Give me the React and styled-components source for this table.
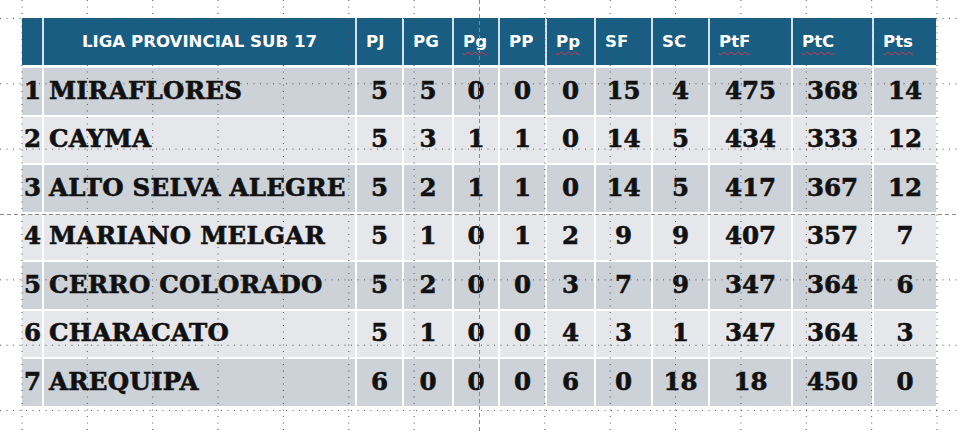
import React from 'react';
import styled, { createGlobalStyle } from 'styled-components';

const GlobalStyle = createGlobalStyle`
  html, body {
    margin: 0;
    padding: 0;
    background: #ffffff;
  }
`;

const COLS = '20px 311px 45px 48px 44px 45px 47px 55px 55px 81px 79px 62px';

const Page = styled.div`
  position: relative;
  width: 959px;
  height: 432px;
  overflow: hidden;
  padding: 18px 0 0 22px;
  box-sizing: border-box;
  background: #ffffff;
`;

const Table = styled.div`
  display: flex;
  flex-direction: column;
  gap: 2px;
  width: 914px;
`;

const HeaderRow = styled.div`
  display: grid;
  grid-template-columns: ${COLS};
  column-gap: 2px;
  height: 47px;
  margin-bottom: 1px;
  background: #d3e3ee;
`;

const HeadCell = styled.div`
  background: #1a5d82;
  color: #ffffff;
  font-family: "DejaVu Sans", "Liberation Sans", sans-serif;
  font-weight: 700;
  font-size: 16.6px;
  display: flex;
  align-items: center;
  justify-content: ${p => (p.$center ? 'center' : 'flex-start')};
  padding-left: ${p => (p.$center ? '0' : '9px')};
  padding-bottom: 1px;
  box-sizing: border-box;
  white-space: nowrap;
`;

const Label = styled.span`
  ${p => p.$typo && `
    text-decoration: underline wavy #d8383e;
    text-decoration-thickness: 1px;
    text-underline-offset: 4px;
  `}
`;

const Row = styled.div`
  display: grid;
  grid-template-columns: ${COLS};
  column-gap: 2px;
  height: 46.5px;
  background: #ffffff;
`;

const Cell = styled.div`
  background: ${p => (p.$dark ? '#cdd1d8' : '#e5e7ea')};
  color: #111111;
  font-family: "DejaVu Serif", "Liberation Serif", serif;
  font-weight: 700;
  font-size: 24.5px;
  -webkit-text-stroke: 0.6px #111111;
  display: flex;
  align-items: center;
  padding-bottom: 2px;
  box-sizing: border-box;
  white-space: nowrap;
  justify-content: center;
  overflow: visible;
`;

const RankCell = styled(Cell)`
  justify-content: flex-end;
  padding-right: 1px;
`;

const NameCell = styled(Cell)`
  justify-content: flex-start;
  padding-left: 5px;
  letter-spacing: 0.25px;
`;

const Guides = styled.svg`
  position: absolute;
  left: 0;
  top: 0;
  pointer-events: none;
`;

const headers = [
  { t: 'PJ' }, { t: 'PG' }, { t: 'Pg', typo: true }, { t: 'PP' },
  { t: 'Pp', typo: true }, { t: 'SF' }, { t: 'SC' },
  { t: 'PtF', typo: true }, { t: 'PtC', typo: true }, { t: 'Pts', typo: true },
];

const teams = [
  ['MIRAFLORES', 5, 5, 0, 0, 0, 15, 4, 475, 368, 14],
  ['CAYMA', 5, 3, 1, 1, 0, 14, 5, 434, 333, 12],
  ['ALTO SELVA ALEGRE', 5, 2, 1, 1, 0, 14, 5, 417, 367, 12],
  ['MARIANO MELGAR', 5, 1, 0, 1, 2, 9, 9, 407, 357, 7],
  ['CERRO COLORADO', 5, 2, 0, 0, 3, 7, 9, 347, 364, 6],
  ['CHARACATO', 5, 1, 0, 0, 4, 3, 1, 347, 364, 3],
  ['AREQUIPA', 6, 0, 0, 0, 6, 0, 18, 18, 450, 0],
];

const STEP = 65.36;

const GuideLines = () => {
  const xs = [];
  for (let k = -7; k <= 7; k++) xs.push({ v: 479.5 + k * STEP, mid: k === 0 });
  const ys = [];
  for (let k = -3; k <= 3; k++) ys.push({ v: 214.5 + k * STEP, mid: k === 0 });
  return (
    <Guides width="959" height="432" viewBox="0 0 959 432">
      {xs.map((l, i) => (
        <line key={'x' + i} x1={l.v} x2={l.v} y1="0" y2="432"
          stroke={l.mid ? '#8a8a8a' : '#555'} strokeWidth="1"
          strokeDasharray={l.mid ? '4 3' : '1 5.5'} />
      ))}
      {ys.map((l, i) => (
        <line key={'y' + i} x1="0" x2="959" y1={l.v} y2={l.v}
          stroke={l.mid ? '#8a8a8a' : '#555'} strokeWidth="1"
          strokeDasharray={l.mid ? '4 3' : '1 5.5'} />
      ))}
    </Guides>
  );
};

const App = () => (
  <Page>
    <GlobalStyle />
    <Table>
      <HeaderRow>
        <HeadCell />
        <HeadCell $center>LIGA PROVINCIAL SUB 17</HeadCell>
        {headers.map(h => (
          <HeadCell key={h.t}>
            <Label $typo={h.typo}>{h.t}</Label>
          </HeadCell>
        ))}
      </HeaderRow>
      {teams.map((team, i) => {
        const [name, ...stats] = team;
        const dark = i % 2 === 0;
        return (
          <Row key={name}>
            <RankCell $dark={dark}>{i + 1}</RankCell>
            <NameCell $dark={dark}>{name}</NameCell>
            {stats.map((s, j) => (
              <Cell key={j} $dark={dark}>{s}</Cell>
            ))}
          </Row>
        );
      })}
    </Table>
    <GuideLines />
  </Page>
);

export default App;
